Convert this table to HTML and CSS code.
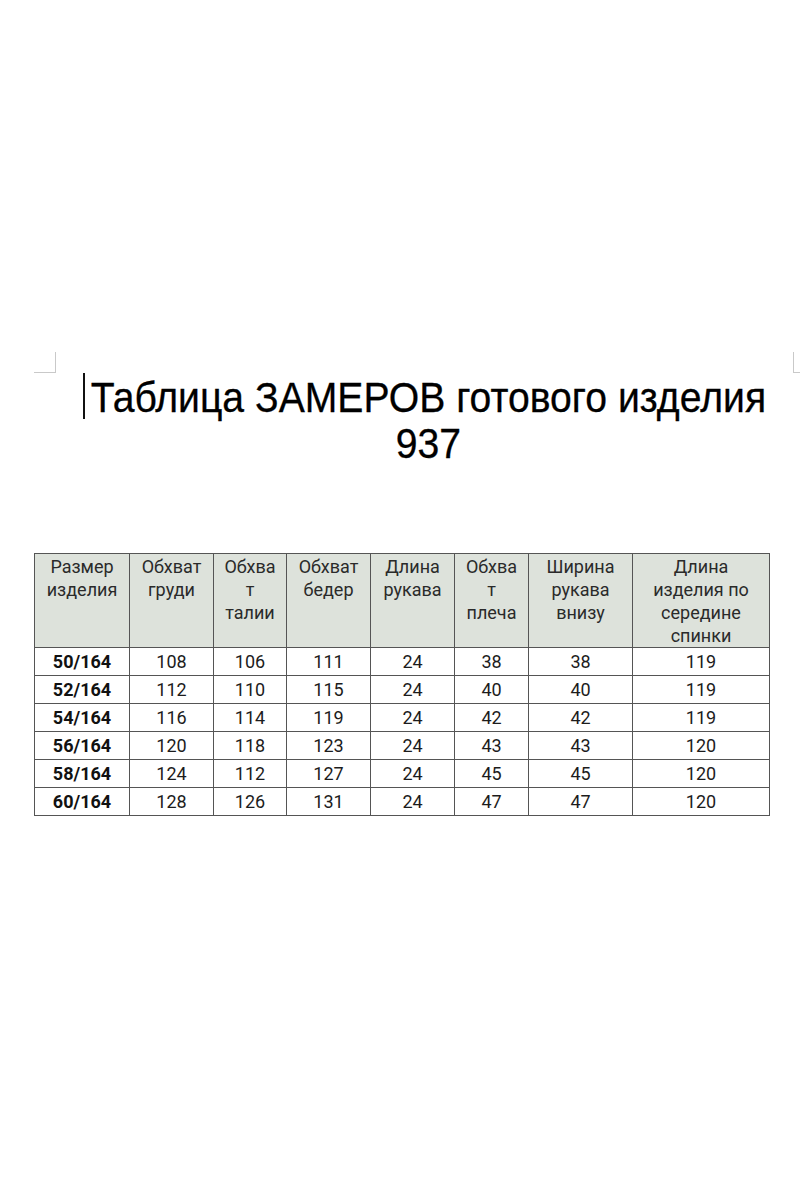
FILE: index.html
```html
<!DOCTYPE html>
<html lang="ru">
<head>
<meta charset="utf-8">
<title>Таблица замеров</title>
<link rel="stylesheet" href="styles.css">
</head>
<body>
<div class="page">
  <div class="marks">
    <span class="mark mark-left"></span>
    <span class="mark mark-right"></span>
  </div>
  <h1 class="title"><span class="caret"></span><span class="title-text">Таблица ЗАМЕРОВ готового изделия<br>937</span></h1>
  <table class="sizes">
    <colgroup>
      <col class="c1"><col class="c2"><col class="c3"><col class="c4"><col class="c5"><col class="c6"><col class="c7"><col class="c8">
    </colgroup>
    <thead>
      <tr>
        <th>Размер<br>изделия</th>
        <th>Обхват<br>груди</th>
        <th>Обхва<br>т<br>талии</th>
        <th>Обхват<br>бедер</th>
        <th>Длина<br>рукава</th>
        <th>Обхва<br>т<br>плеча</th>
        <th>Ширина<br>рукава<br>внизу</th>
        <th>Длина<br>изделия по<br>середине<br>спинки</th>
      </tr>
    </thead>
    <tbody>
      <tr><td class="size">50/164</td><td>108</td><td>106</td><td>111</td><td>24</td><td>38</td><td>38</td><td>119</td></tr>
      <tr><td class="size">52/164</td><td>112</td><td>110</td><td>115</td><td>24</td><td>40</td><td>40</td><td>119</td></tr>
      <tr><td class="size">54/164</td><td>116</td><td>114</td><td>119</td><td>24</td><td>42</td><td>42</td><td>119</td></tr>
      <tr><td class="size">56/164</td><td>120</td><td>118</td><td>123</td><td>24</td><td>43</td><td>43</td><td>120</td></tr>
      <tr><td class="size">58/164</td><td>124</td><td>112</td><td>127</td><td>24</td><td>45</td><td>45</td><td>120</td></tr>
      <tr><td class="size">60/164</td><td>128</td><td>126</td><td>131</td><td>24</td><td>47</td><td>47</td><td>120</td></tr>
    </tbody>
  </table>
</div>
</body>
</html>
```
FILE: styles.css
```css
html, body {
  margin: 0;
  padding: 0;
  background: #ffffff;
}

.page {
  width: 800px;
  height: 1200px;
  overflow: hidden;
  padding-top: 352px;
  box-sizing: border-box;
  font-family: Roboto, "Liberation Sans", sans-serif;
  color: #222;
}

.marks {
  display: flex;
  justify-content: space-between;
  height: 21px;
  padding-left: 34px;
}

.mark {
  display: block;
  height: 20px;
  border-bottom: 1px solid #c9c9c9;
}

.mark-left {
  width: 21px;
  border-right: 1px solid #c9c9c9;
}

.mark-right {
  width: 12px;
  margin-right: -6px;
  border-left: 1px solid #c9c9c9;
}

.title {
  margin: 0;
  padding: 0 30px 0 86px;
  font-family: "Liberation Sans", Arial, sans-serif;
  font-weight: normal;
  font-size: 42px;
  line-height: 46px;
  color: #000;
  text-align: center;
  position: relative;
}

.caret {
  position: absolute;
  left: 83px;
  top: 0;
  width: 2px;
  height: 46px;
  background: #111;
}

.title-text {
  display: inline-block;
  margin: 0 -40px;
  transform: scaleX(0.932);
  transform-origin: center top;
  padding-top: 2px;
  white-space: nowrap;
  -webkit-text-stroke: 0.3px #000;
}

.sizes {
  margin: 86px 0 0 34px;
  width: 735px;
  border-collapse: collapse;
  table-layout: fixed;
  font-size: 18px;
}

.c1 { width: 95px; }
.c2 { width: 84px; }
.c3 { width: 73px; }
.c4 { width: 84px; }
.c5 { width: 84px; }
.c6 { width: 74px; }
.c7 { width: 104px; }
.c8 { width: 137px; }

.sizes th,
.sizes td {
  border: 1px solid #555;
  text-align: center;
  padding: 0;
}

.sizes th {
  background: #dde2db;
  font-weight: normal;
  color: #2a2a2a;
  vertical-align: top;
  line-height: 23px;
  height: 93px;
  padding-top: 1px;
  box-sizing: border-box;
}

.sizes td {
  height: 27px;
  line-height: 27px;
  color: #1c1c1c;
}

.sizes td.size {
  font-weight: bold;
  color: #111;
}
```
